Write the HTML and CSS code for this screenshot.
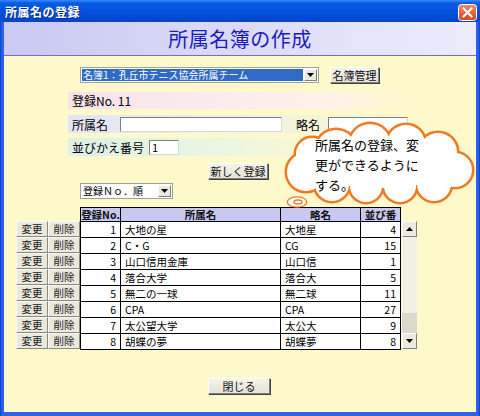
FILE: index.html
```html
<!DOCTYPE html>
<html lang="ja">
<head>
<meta charset="utf-8">
<title>所属名の登録</title>
<link rel="stylesheet" href="styles.css">
</head>
<body>
<div class="window">
  <div class="titlebar">
    <span class="title">所属名の登録</span>
    <span class="close">
      <svg width="19" height="17" viewBox="0 0 19 17">
        <defs>
          <linearGradient id="cg" x1="0" y1="0" x2="0" y2="1">
            <stop offset="0" stop-color="#f08a6a"/>
            <stop offset="1" stop-color="#d2461c"/>
          </linearGradient>
        </defs>
        <rect x="0.5" y="0.5" width="18" height="16" rx="3" fill="url(#cg)" stroke="#fff"/>
        <path d="M5.5 4.5 L13.5 12.5 M13.5 4.5 L5.5 12.5" stroke="#fff" stroke-width="2" stroke-linecap="square"/>
      </svg>
    </span>
  </div>
  <div class="client">
    <div class="banner"><h1 class="banner-title">所属名簿の作成</h1></div>

    <div class="row-top">
      <div class="select sel-main">
        <span class="sel-text">名簿1：孔丘市テニス協会所属チーム</span>
        <span class="sel-arrow"><svg width="7" height="4" viewBox="0 0 7 4"><path d="M0 0 H7 L3.5 4 Z" fill="#000"/></svg></span>
      </div>
      <span class="btn btn-kanri">名簿管理</span>
    </div>

    <div class="field field-no">登録No. 11</div>

    <div class="field field-name">
      <span class="lbl">所属名</span>
      <span class="input in-name"></span>
      <span class="lbl lbl-abbr">略名</span>
      <span class="input in-abbr"></span>
    </div>

    <div class="field field-order">
      <span class="lbl">並びかえ番号</span>
      <span class="input in-order">1</span>
    </div>

    <div class="row-new"><span class="btn btn-new">新しく登録</span></div>

    <div class="select sel-sort">
      <span class="sel-sort-text">登録Ｎｏ．順</span>
      <span class="sel-arrow"><svg width="7" height="4" viewBox="0 0 7 4"><path d="M0 0 H7 L3.5 4 Z" fill="#000"/></svg></span>
    </div>

    <div class="list-area">
      <div class="side">
        <div class="side-row"><span class="sbtn">変更</span><span class="sbtn">削除</span></div>
        <div class="side-row"><span class="sbtn">変更</span><span class="sbtn">削除</span></div>
        <div class="side-row"><span class="sbtn">変更</span><span class="sbtn">削除</span></div>
        <div class="side-row"><span class="sbtn">変更</span><span class="sbtn">削除</span></div>
        <div class="side-row"><span class="sbtn">変更</span><span class="sbtn">削除</span></div>
        <div class="side-row"><span class="sbtn">変更</span><span class="sbtn">削除</span></div>
        <div class="side-row"><span class="sbtn">変更</span><span class="sbtn">削除</span></div>
        <div class="side-row"><span class="sbtn">変更</span><span class="sbtn">削除</span></div>
      </div>
      <div class="grid">
        <div class="hd">登録No.</div><div class="hd">所属名</div><div class="hd">略名</div><div class="hd">並び番</div>
        <div class="c num">1</div><div class="c">大地の星</div><div class="c">大地星</div><div class="c num">4</div>
        <div class="c num">2</div><div class="c">C・G</div><div class="c">CG</div><div class="c num">15</div>
        <div class="c num">3</div><div class="c">山口信用金庫</div><div class="c">山口信</div><div class="c num">1</div>
        <div class="c num">4</div><div class="c">落合大学</div><div class="c">落合大</div><div class="c num">5</div>
        <div class="c num">5</div><div class="c">無二の一球</div><div class="c">無二球</div><div class="c num">11</div>
        <div class="c num">6</div><div class="c">CPA</div><div class="c">CPA</div><div class="c num">27</div>
        <div class="c num">7</div><div class="c">太公望大学</div><div class="c">太公大</div><div class="c num">9</div>
        <div class="c num">8</div><div class="c">胡蝶の夢</div><div class="c">胡蝶夢</div><div class="c num">8</div>
      </div>
      <div class="scrollbar">
        <span class="sb-btn"><svg width="7" height="4" viewBox="0 0 7 4"><path d="M0 4 H7 L3.5 0 Z" fill="#000"/></svg></span>
        <span class="sb-track"><span class="sb-thumb"></span></span>
        <span class="sb-btn"><svg width="7" height="4" viewBox="0 0 7 4"><path d="M0 0 H7 L3.5 4 Z" fill="#000"/></svg></span>
      </div>
    </div>

    <div class="row-close"><span class="btn btn-close">閉じる</span></div>
  </div>

  <div class="callout">
    <svg class="cloud" width="196" height="92" viewBox="0 0 196 92">
      <g fill="none" stroke="#f07a22" stroke-width="5">
        <circle cx="54" cy="30" r="20"/>
        <circle cx="88" cy="24" r="20"/>
        <circle cx="124" cy="24" r="19"/>
        <circle cx="156" cy="32" r="19"/>
        <circle cx="173" cy="50" r="17"/>
        <circle cx="152" cy="64" r="17"/>
        <circle cx="118" cy="66" r="16"/>
        <circle cx="84" cy="66" r="16"/>
        <circle cx="50" cy="64" r="17"/>
        <circle cx="24" cy="52" r="19"/>
        <circle cx="30" cy="34" r="16"/>
        <ellipse cx="98" cy="46" rx="72" ry="22"/>
        <ellipse cx="15" cy="82" rx="9" ry="4.5" stroke-width="2.5"/>
      </g>
      <g fill="#fff">
        <circle cx="54" cy="30" r="20"/>
        <circle cx="88" cy="24" r="20"/>
        <circle cx="124" cy="24" r="19"/>
        <circle cx="156" cy="32" r="19"/>
        <circle cx="173" cy="50" r="17"/>
        <circle cx="152" cy="64" r="17"/>
        <circle cx="118" cy="66" r="16"/>
        <circle cx="84" cy="66" r="16"/>
        <circle cx="50" cy="64" r="17"/>
        <circle cx="24" cy="52" r="19"/>
        <circle cx="30" cy="34" r="16"/>
        <ellipse cx="98" cy="46" rx="72" ry="22"/>
        <ellipse cx="15" cy="82" rx="9" ry="4.5"/>
      </g>
      <ellipse cx="16" cy="82" rx="4" ry="2" fill="none" stroke="#f07a22" stroke-width="1.5"/>
    </svg>
    <p class="callout-text">所属名の登録、変<br>更ができるように<br>する。</p>
  </div>
</div>
</body>
</html>
```

FILE: styles.css
```css
* { box-sizing: border-box; }

html, body {
  margin: 0;
  padding: 0;
  width: 480px;
  height: 416px;
  overflow: hidden;
  background: #fff;
}

body {
  font-family: "Noto Sans CJK JP", "Liberation Sans", sans-serif;
  font-size: 12px;
  color: #000;
}

.window {
  position: relative;
  width: 480px;
  height: 416px;
  display: flex;
  flex-direction: column;
  background: linear-gradient(to right, #0a3fd0 0, #2a62e8 2px, #2a62e8 478px, #0a3fd0 480px);
}

.titlebar {
  height: 22px;
  flex: none;
  display: flex;
  align-items: center;
  justify-content: space-between;
  padding: 0 3px 0 5px;
  background: linear-gradient(to bottom, #3a8cf8 0, #0a5ae8 3px, #0450dc 12px, #0348d0 19px, #0a44c4 22px);
}

.title {
  color: #fff;
  font-weight: bold;
  font-size: 12px;
  letter-spacing: 0.5px;
  text-shadow: 1px 1px 0 #0a2a80;
}

.close {
  display: flex;
  margin-top: 2px;
}

.client {
  flex: 1;
  margin: 0 4px 4px;
  background: #fdf9cb;
  display: flex;
  flex-direction: column;
}

.banner {
  height: 34px;
  flex: none;
  border-bottom: 1px solid #7070c8;
  background: linear-gradient(to right, #c9c9f2, #e2e2fa 70%, #ececfc);
  display: flex;
  align-items: center;
  justify-content: center;
}

.banner-title {
  margin: 0;
  font-size: 20px;
  font-weight: normal;
  color: #1a1ac4;
  letter-spacing: 0.5px;
}

.row-top {
  margin: 11px 0 0 76px;
  display: flex;
  align-items: center;
  height: 16px;
}

.select {
  display: flex;
  align-items: center;
  background: #fff;
  border: 1px solid #a0a0a0;
  height: 16px;
  padding: 1px;
}

.sel-main { width: 239px; }

.sel-text {
  flex: 1;
  height: 12px;
  background: #316ac5;
  color: #fff;
  font-size: 10px;
  line-height: 12px;
  padding-left: 1px;
  white-space: nowrap;
}

.sel-arrow {
  width: 13px;
  height: 12px;
  margin-left: 1px;
  background: #ece9e0;
  border: 1px solid;
  border-color: #fff #808080 #808080 #fff;
  display: flex;
  align-items: center;
  justify-content: center;
}

.btn {
  display: flex;
  align-items: center;
  justify-content: center;
  background: linear-gradient(to bottom, #f4f2ea, #e6e3d8);
  border: 1px solid;
  border-color: #fff #808080 #808080 #fff;
  box-shadow: 1px 1px 0 #404040;
  font-size: 11px;
  line-height: 14px;
  color: #111;
}

.btn-kanri {
  margin-left: 11px;
  width: 49px;
  height: 16px;
}

.field {
  margin-left: 64px;
  width: 342px;
  display: flex;
  align-items: center;
}

.field-no {
  margin-top: 9px;
  height: 17px;
  padding-left: 4px;
  background: linear-gradient(to right, #f8e2ea, #fcecee 50%, #fdf3e6 80%, #fdf9cb);
}

.field-name {
  margin-top: 6px;
  height: 18px;
  padding-left: 4px;
  background: linear-gradient(to right, #e4e4f6, #efefe8 45%, #fdf9cb);
}

.field-order {
  margin-top: 5px;
  height: 18px;
  padding-left: 4px;
  background: linear-gradient(to right, #ddf1e6, #eaf6e2 45%, #fdf9cb 75%);
}

.lbl { white-space: nowrap; }

.input {
  height: 15px;
  background: #fff;
  border: 1px solid;
  border-color: #808080 #d8d8d0 #d8d8d0 #808080;
  font-size: 11px;
  line-height: 13px;
  padding-left: 2px;
}

.in-name { width: 162px; margin-left: 12px; }
.lbl-abbr { margin-left: 14px; }
.in-abbr { width: 80px; margin-left: 8px; }
.in-order { width: 30px; margin-left: 5px; }

.row-new {
  margin: 7px 0 0 204px;
  display: flex;
}

.btn-new { width: 60px; height: 16px; }

.sel-sort {
  margin: 4px 0 0 76px;
  width: 93px;
}

.sel-sort-text {
  flex: 1;
  font-size: 10px;
  line-height: 12px;
  padding-left: 1px;
  white-space: nowrap;
}

.list-area {
  margin: 8px 0 0 12px;
  display: flex;
  align-items: flex-start;
}

.side {
  width: 64px;
  padding-top: 14px;
  display: flex;
  flex-direction: column;
}

.side-row {
  height: 16px;
  display: flex;
}

.sbtn {
  width: 32px;
  height: 16px;
  display: flex;
  align-items: center;
  justify-content: center;
  font-size: 10.5px;
  line-height: 14px;
  color: #222;
  background: #ebe8dc;
  border: 1px solid;
  border-color: #fbfaf4 #8a8a80 #8a8a80 #fbfaf4;
}

.grid {
  display: grid;
  grid-template-columns: 40px 160px 80px 40px;
  grid-template-rows: 14px repeat(8, 16px);
  border-top: 1px solid #000;
  border-left: 1px solid #000;
  width: 321px;
}

.hd, .c {
  border-right: 1px solid #000;
  border-bottom: 1px solid #000;
  font-size: 10.5px;
  line-height: 13px;
  white-space: nowrap;
  overflow: hidden;
  display: flex;
  align-items: center;
}

.hd {
  background: #c8c8f0;
  font-weight: bold;
  justify-content: center;
  color: #111;
  line-height: 12px;
}

.c {
  background: #fff;
  padding-left: 4px;
}

.num {
  justify-content: flex-end;
  padding: 0 4px 0 0;
}

.scrollbar {
  margin-top: 14px;
  margin-left: 1px;
  width: 15px;
  height: 128px;
  display: flex;
  flex-direction: column;
  background: #f2f0e6;
}

.sb-btn {
  height: 16px;
  flex: none;
  background: #ece9e0;
  border: 1px solid;
  border-color: #fff #808080 #808080 #fff;
  display: flex;
  align-items: center;
  justify-content: center;
}

.sb-track {
  flex: 1;
  display: flex;
  flex-direction: column;
  justify-content: flex-end;
}

.sb-thumb {
  height: 20px;
  background: #dcd9cc;
}

.row-close {
  margin: 28px 0 0 204px;
  display: flex;
}

.btn-close { width: 62px; height: 16px; }

.callout {
  position: absolute;
  left: 282px;
  top: 120px;
  width: 196px;
  height: 92px;
}

.cloud {
  position: absolute;
  left: 0;
  top: 0;
}

.callout-text {
  position: absolute;
  left: 33px;
  top: 15px;
  margin: 0;
  font-size: 13px;
  line-height: 20px;
  white-space: nowrap;
}
```
